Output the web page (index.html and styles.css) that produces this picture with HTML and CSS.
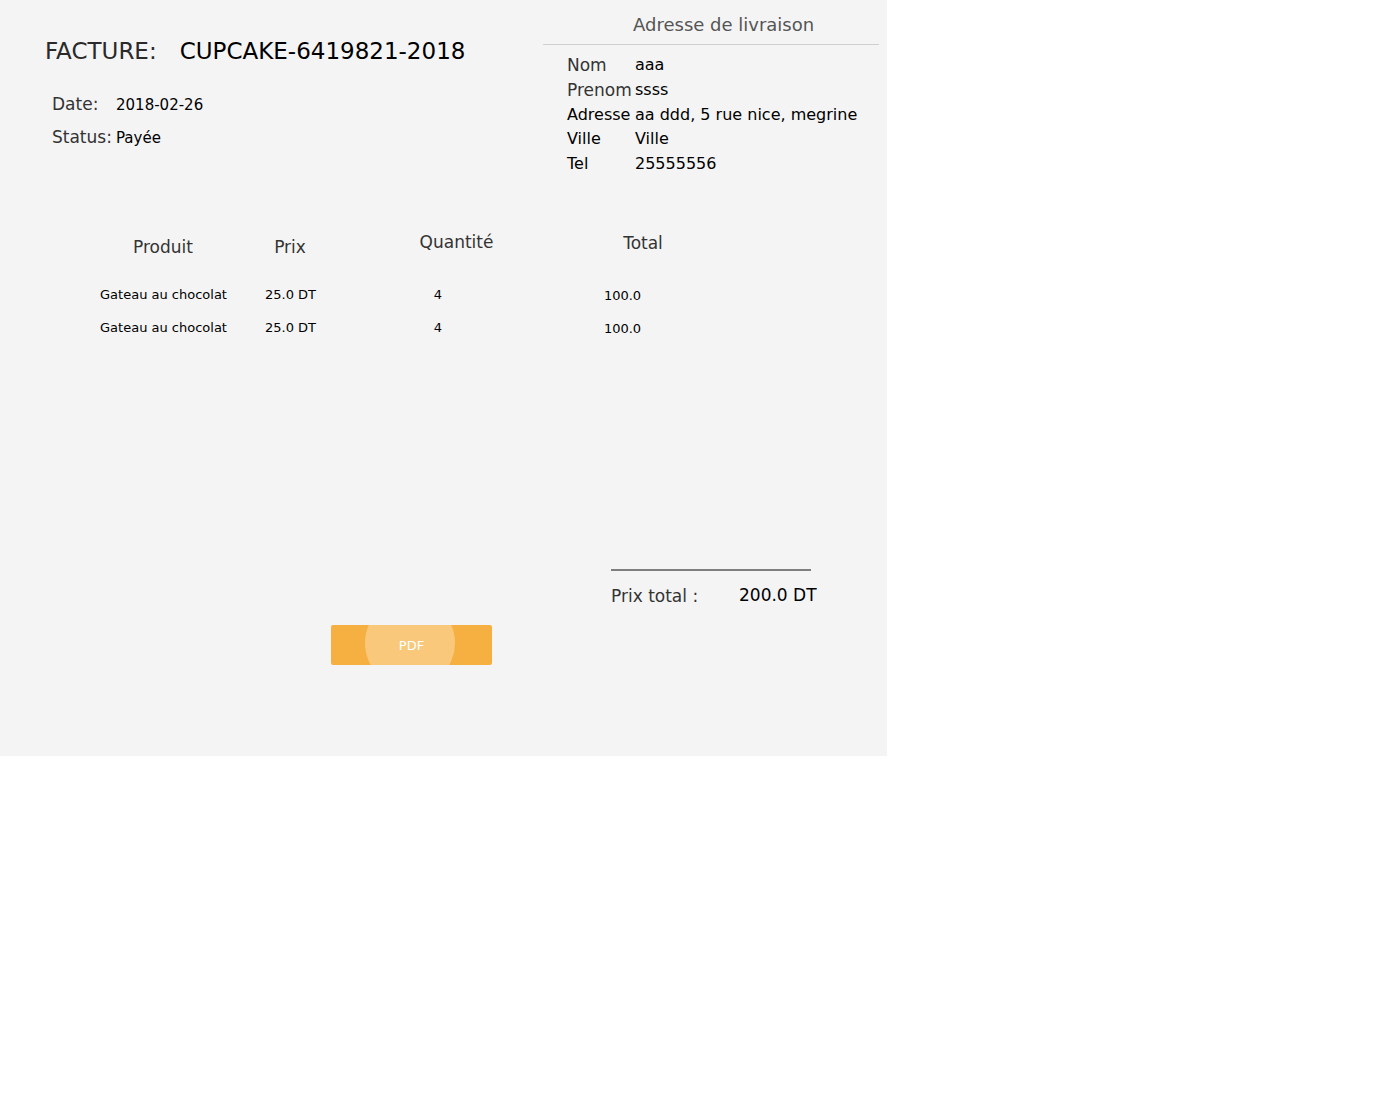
FILE: index.html
```html
<!DOCTYPE html>
<html lang="fr">
<head>
<meta charset="utf-8">
<title>Facture</title>
<link rel="stylesheet" href="styles.css">
</head>
<body>
<div class="invoice">
  <div class="top">
    <div class="left">
      <div class="title"><span class="title-label">FACTURE:</span><span class="title-value">CUPCAKE-6419821-2018</span></div>
      <div class="meta">
        <div class="meta-row"><span class="meta-label">Date:</span><span class="meta-value">2018-02-26</span></div>
        <div class="meta-row"><span class="meta-label">Status:</span><span class="meta-value">Payée</span></div>
      </div>
    </div>
    <div class="right">
      <div class="addr-heading">Adresse de livraison</div>
      <div class="addr">
        <span class="addr-label strong">Nom</span><span class="addr-value">aaa</span>
        <span class="addr-label strong">Prenom</span><span class="addr-value">ssss</span>
        <span class="addr-label">Adresse</span><span class="addr-value">aa ddd, 5 rue nice, megrine</span>
        <span class="addr-label">Ville</span><span class="addr-value">Ville</span>
        <span class="addr-label">Tel</span><span class="addr-value">25555556</span>
      </div>
    </div>
  </div>

  <div class="table">
    <div class="thead">
      <div class="th c1 low">Produit</div>
      <div class="th c2 low">Prix</div>
      <div class="th c3">Quantité</div>
      <div class="th c4 mid">Total</div>
    </div>
    <div class="tbody">
      <div class="tr">
        <div class="td d1">Gateau au chocolat</div>
        <div class="td d2">25.0 DT</div>
        <div class="td d3">4</div>
        <div class="td d4">100.0</div>
      </div>
      <div class="tr">
        <div class="td d1">Gateau au chocolat</div>
        <div class="td d2">25.0 DT</div>
        <div class="td d3">4</div>
        <div class="td d4">100.0</div>
      </div>
    </div>
  </div>

  <div class="summary">
    <span class="sum-label">Prix total :</span><span class="sum-value">200.0 DT</span>
  </div>

  <div class="actions">
    <button class="pdf-btn" type="button"><span class="ripple"></span><span class="btn-text">PDF</span></button>
  </div>
</div>
</body>
</html>
```

FILE: styles.css
```css
html, body {
  margin: 0;
  padding: 0;
  background: #ffffff;
}

body {
  font-family: "DejaVu Sans", "Liberation Sans", sans-serif;
  color: #000;
}

.invoice {
  width: 887px;
  height: 756px;
  background: #f4f4f4;
  box-sizing: border-box;
  overflow: hidden;
}

.top {
  display: flex;
  height: 176px;
}

.left {
  width: 543px;
  flex: none;
}

.title {
  padding-top: 38px;
  padding-left: 45px;
  font-size: 23px;
  line-height: 27px;
  white-space: nowrap;
}

.title-label {
  color: #2a2a2a;
  margin-right: 23px;
}

.title-value {
  color: #000;
}

.meta {
  margin-top: 23px;
  padding-left: 52px;
}

.meta-row {
  display: flex;
  align-items: baseline;
  height: 32.5px;
  line-height: 32.5px;
  font-size: 17px;
}

.meta-label {
  width: 64px;
  flex: none;
  color: #333;
  font-size: 17px;
}

.meta-value {
  font-size: 15px;
  color: #000;
}

.right {
  width: 336px;
  flex: none;
}

.addr-heading {
  padding-top: 13px;
  padding-left: 90px;
  padding-bottom: 7px;
  font-size: 18px;
  line-height: 24px;
  color: #555;
  border-bottom: 1px solid #cfcfcf;
}

.addr {
  margin-top: 8px;
  padding-left: 24px;
  display: grid;
  grid-template-columns: 68px auto;
  grid-auto-rows: 24.75px;
  line-height: 24.75px;
  font-size: 16px;
  white-space: nowrap;
}

.addr-label {
  color: #000;
}

.addr-label.strong {
  font-size: 17px;
  line-height: 24px;
  color: #333;
}

.addr-value {
  color: #000;
}

/* table */
.table {
  margin-top: 54px;
}

.thead {
  display: flex;
  align-items: flex-start;
  padding-left: 90px;
  height: 24px;
  font-size: 17px;
  line-height: 24px;
  color: #333;
}

.th {
  text-align: center;
  flex: none;
  white-space: nowrap;
}

.th.low { padding-top: 5px; }
.th.mid { padding-top: 1px; }

.c1 { width: 146px; }
.c2 { width: 108px; }
.c3 { width: 225px; }
.c4 { width: 148px; }

.tbody {
  margin-top: 24px;
  padding-left: 90px;
}

.tr {
  display: flex;
  height: 33px;
  font-size: 13px;
  line-height: 33px;
  color: #000;
}

.td {
  flex: none;
  text-align: center;
  white-space: nowrap;
}

.d1 { width: 147px; }
.d2 { width: 107px; }
.d3 { width: 188px; }
.d4 { width: 181px; padding-top: 1px; }

/* summary */
.summary {
  margin-top: 225px;
  margin-left: 611px;
  width: 200px;
  height: 24px;
  border-top: 2px solid #7f7f7f;
  padding-top: 12px;
  display: flex;
  font-size: 17px;
  line-height: 24px;
  white-space: nowrap;
}

.sum-label {
  width: 128px;
  flex: none;
  color: #333;
  padding-top: 1px;
}

.sum-value {
  color: #000;
}

/* button */
.actions {
  margin-top: 18px;
  padding-left: 331px;
}

.pdf-btn {
  position: relative;
  overflow: hidden;
  width: 161px;
  height: 40px;
  border: none;
  border-radius: 2px;
  background: #f6b042;
  padding: 1px 0 0;
  margin: 0;
  display: block;
  font-family: "DejaVu Sans", "Liberation Sans", sans-serif;
  font-size: 13px;
  line-height: 39px;
  color: #fff;
  cursor: pointer;
}

.ripple {
  position: absolute;
  left: 34px;
  top: -27px;
  width: 90px;
  height: 90px;
  border-radius: 50%;
  background: rgba(255, 255, 255, 0.3);
}

.btn-text {
  position: relative;
}
```
